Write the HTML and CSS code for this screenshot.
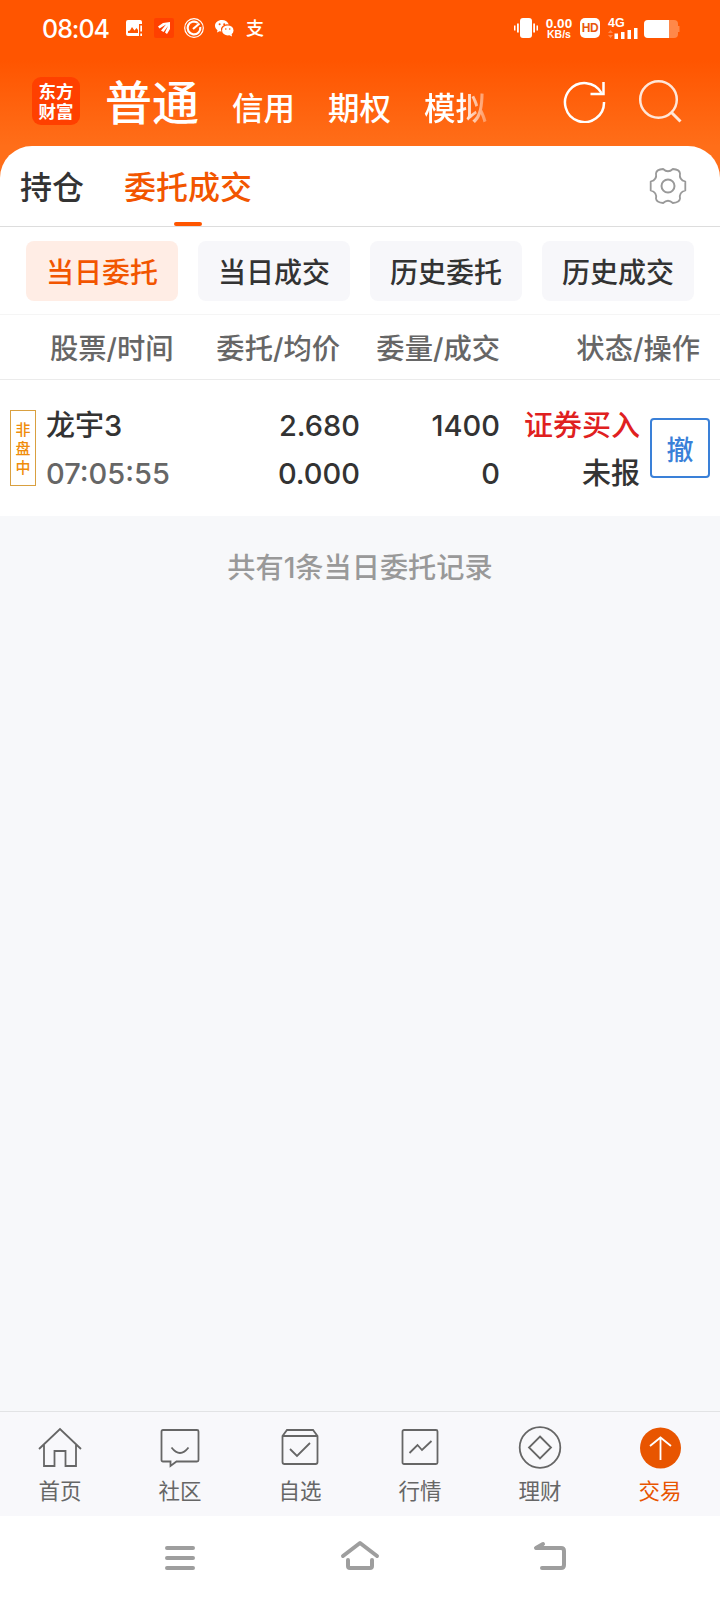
FILE: index.html
```
<!DOCTYPE html>
<html lang="zh-CN">
<head>
  <meta charset="UTF-8">
  <meta name="viewport" content="width=device-width, initial-scale=1.0">
  <title>委托成交</title>
  <link rel="stylesheet" href="styles.css">
</head>
<body>
  <div class="app">
    <header class="header">
      <div class="status">
        <span class="time">08:04</span>
        <svg class="s-pic" width="16" height="16" viewBox="0 0 16 16">
          <path fill="#fff" fill-rule="evenodd" d="M2 0H14Q16 0 16 2V4H13V16H2Q0 16 0 14V2Q0 0 2 0ZM2 13H12V10L10.500 8L8.500 10.500L6 7L4 10.500L2 11Z"/>
          <path fill="#fff" d="M14.300 5.500H16v6h-1.700zM14.300 13.500H16V16h-1.700z"/>
        </svg>
        <svg class="s-app" width="20" height="20" viewBox="0 0 20 20">
          <rect width="20" height="20" rx="2" fill="#ff4000"/>
          <path fill="#fff" d="M16 4V11L13 16L11 14.500L14 8L9.500 14L7 12.500L12 6.500L5.500 10.500L4 8.500L9 5Z"/>
        </svg>
        <svg class="s-gauge" width="20" height="20" viewBox="0 0 20 20" fill="none" stroke="#fff">
          <circle cx="10" cy="10" r="9.300" stroke-width="1.200"/>
          <path d="M14 5A6.400 6.400 0 1 0 16.300 9" stroke-width="2.200"/>
          <path d="M9 11L15.500 5.500" stroke-width="2.200"/>
        </svg>
        <svg class="s-chat" width="19" height="17" viewBox="0 0 19 17">
          <path fill="#fff" d="M7 0C3 0 0 2.500 0 5.800C0 7.600 1 9.200 2.500 10.200L2 12.500L4.500 11.200L6.500 11.600A6 5.200 0 0 1 13.800 4.600C13 2 10.300 0 7 0Z"/>
          <ellipse cx="12.800" cy="10.400" rx="5.700" ry="5" fill="#fff"/>
          <path fill="#fff" d="M14 15L17 16.500L16.500 13.500Z"/>
          <g fill="#ff5500"><circle cx="4.600" cy="4.300" r="1"/><circle cx="9.200" cy="4.300" r="1"/><circle cx="10.800" cy="9" r=".8"/><circle cx="14.700" cy="9" r=".8"/></g>
        </svg>
        <span class="s-pay">支</span>
        <div class="status-right">
          <svg width="24" height="20" viewBox="0 0 24 20" fill="#fff">
            <rect x="6" width="12" height="20" rx="3"/>
            <path d="M0 7.500h1.500v5H0zM3 5.500h1.800v9H3zM19.200 5.500H21v9h-1.800zM22.500 7.500H24v5h-1.500z"/>
          </svg>
          <div class="speed"><b>0.00</b><i>KB/s</i></div>
          <span class="hd">HD</span>
          <div class="signal">
            <b>4G</b>
            <svg width="30" height="12" viewBox="0 0 30 12" fill="#fff">
              <path d="M0 6L2.500 3L5 6ZM0 8L2.500 11L5 8Z" opacity=".3"/>
              <path d="M6.500 6.500H10V12H6.500zM13 5h3.500v7H13zM19.500 3H23v9h-3.500zM26 1h3.500v11H26z"/>
            </svg>
          </div>
          <svg class="battery" width="36" height="18" viewBox="0 0 36 18">
            <rect width="34" height="18" rx="4" fill="#ff8849"/>
            <path fill="#ff8849" d="M33 6h2.500v6H33z"/>
            <path fill="#fff" d="M4 0H25V18H4Q0 18 0 14V4Q0 0 4 0Z"/>
          </svg>
        </div>
      </div>
      <div class="topbar">
        <div class="logo">东方<br>财富</div>
        <nav class="accounts">
          <span class="current">普通</span>
          <span>信用</span>
          <span>期权</span>
          <span class="fade">模拟</span>
        </nav>
        <svg class="refresh" width="44" height="44" viewBox="0 0 44 44" fill="none" stroke="#fff" stroke-width="2.500">
          <path d="M42 23A19.500 19.500 0 1 1 39.500 14"/>
          <path d="M41.500 3V15H28.500"/>
        </svg>
        <svg class="search" width="44" height="44" viewBox="0 0 44 44" fill="none" stroke="#ffe6d8" stroke-width="2.500">
          <circle cx="20.500" cy="20.500" r="18.300"/>
          <path d="M33 33L42.500 42.500" stroke-width="3"/>
        </svg>
      </div>
    </header>

    <main class="panel">
      <div class="tabs">
        <span class="tab">持仓</span>
        <span class="tab active">委托成交</span>
        <svg class="gear" width="38" height="38" viewBox="-19 -19 38 38" fill="none" stroke="#999" stroke-width="1.800" stroke-linejoin="round">
          <path d="M17.300 4.500Q10.800 6.200 12 12.700Q11.500 16.500 4.900 17Q0 12.500 -4.900 17Q-11.500 16.500 -12 12.700Q-10.800 6.200 -17.300 4.500V-4.500Q-10.800 -6.200 -12 -12.700Q-11.500 -16.500 -4.900 -17Q0 -12.500 4.900 -17Q11.500 -16.500 12 -12.700Q10.800 -6.200 17.300 -4.500Z"/>
          <circle r="6.500" stroke-width="2"/>
        </svg>
      </div>
      <div class="filters">
        <button class="filter selected">当日委托</button>
        <button class="filter">当日成交</button>
        <button class="filter">历史委托</button>
        <button class="filter">历史成交</button>
      </div>
      <div class="list-head">
        <span>股票/时间</span>
        <span>委托/均价</span>
        <span>委量/成交</span>
        <span>状态/操作</span>
      </div>
      <div class="order">
        <div class="badge">非<br>盘<br>中</div>
        <div class="cell"><p>龙宇3</p><p class="muted">07:05:55</p></div>
        <div class="cell right"><p>2.680</p><p>0.000</p></div>
        <div class="cell right"><p>1400</p><p>0</p></div>
        <div class="cell right"><p class="buy">证券买入</p><p>未报</p></div>
        <button class="cancel">撤</button>
      </div>
    </main>
    <p class="summary">共有1条当日委托记录</p>

    <nav class="tabbar">
      <a class="item">
        <svg width="44" height="44" viewBox="0 0 44 44">
          <path d="M1 23L22 3L43 23M6 19V40H16.500V25H27.500V40H38V19"/>
        </svg>
        <span>首页</span>
      </a>
      <a class="item">
        <svg width="44" height="44" viewBox="0 0 44 44">
          <path d="M5 4H39Q40.500 4 40.500 5.500V34Q40.500 35.500 39 35.500H18.500L12.500 40V35.500H5Q3.500 35.500 3.500 34V5.500Q3.500 4 5 4Z"/>
          <path d="M13.500 21.500Q22 32.500 30.500 21.500"/>
        </svg>
        <span>社区</span>
      </a>
      <a class="item">
        <svg width="44" height="44" viewBox="0 0 44 44">
          <path d="M4.500 10L9 4H35L39.500 10V36Q39.500 38 37.500 38H6.500Q4.500 38 4.500 36ZM4.500 10H39.500"/>
          <path d="M12 23L19 30L32 17"/>
        </svg>
        <span>自选</span>
      </a>
      <a class="item">
        <svg width="44" height="44" viewBox="0 0 44 44">
          <rect x="4.500" y="4" width="35" height="34" rx="1.500"/>
          <path d="M11.500 27L19.500 19L24 24L33.500 15"/>
        </svg>
        <span>行情</span>
      </a>
      <a class="item">
        <svg width="44" height="44" viewBox="0 0 44 44">
          <circle cx="22" cy="21.500" r="20.300"/>
          <path d="M22 10.500L33 21.500L22 32.500L11 21.500Z"/>
        </svg>
        <span>理财</span>
      </a>
      <a class="item on">
        <svg width="44" height="44" viewBox="0 0 44 44">
          <circle class="disc" cx="22.500" cy="22" r="20.500"/>
          <path class="arrow" d="M22.500 34V11.500M12 20L22.500 11.500L33 20"/>
        </svg>
        <span>交易</span>
      </a>
    </nav>

    <div class="sysnav">
      <svg width="40" height="40" viewBox="0 0 40 40"><path d="M7 10H33M7 20H33M7 30H33"/></svg>
      <svg width="40" height="40" viewBox="0 0 40 40"><path d="M3 18L20 5L37 18M8 22V28Q8 30 10 30H30Q32 30 32 28V22"/></svg>
      <svg width="40" height="40" viewBox="0 0 40 40"><path d="M13 6L6 10H31Q34 10 34 13V27Q34 30 31 30H12"/></svg>
    </div>
  </div>
</body>
</html>
```

FILE: styles.css
```
*{
  box-sizing: border-box;
}

body{
  margin: 0;
  font-family: Inter, "Noto Sans CJK SC", sans-serif;
  color: #333;
}

p{
  margin: 0;
}

svg{
  display: block;
  flex: none;
}

button{
  padding: 0;
  border: none;
  font-family: inherit;
  font-weight: 500;
}

.app{
  width: 720px;
  height: 1600px;
  display: flex;
  flex-direction: column;
  background-color: #f7f8fa;
}

/* header */
.header{
  height: 186px;
  margin-bottom: -40px;
  background: linear-gradient(#ff5500 60px, #ff6e19 146px);
  color: white;
}

.status{
  height: 56px;
  padding: 0 40px 0 42px;
  display: flex;
  align-items: center;
}

.time{
  width: 84px;
  padding-top: 2px;
  font-size: 25px;
  font-weight: 500;
  letter-spacing: -1px;
}

.s-app{
  margin-left: 12px;
}

.s-gauge{
  margin-left: 10px;
}

.s-chat{
  margin-left: 11px;
}

.s-pay{
  margin-left: 12px;
  padding-top: 2px;
  font-size: 18px;
  font-weight: 500;
  line-height: 20px;
}

.status-right{
  margin-left: auto;
  display: flex;
  align-items: center;
}

.speed{
  width: 28px;
  margin-left: 7px;
  font-family: "Liberation Sans", sans-serif;
  font-weight: bold;
  text-align: center;
}

.speed b, .speed i{
  display: block;
  font-style: normal;
  font-size: 13.5px;
  line-height: 11px;
}

.speed i{
  font-size: 10.5px;
  line-height: 10px;
}

.hd{
  width: 20px;
  height: 20px;
  margin-left: 7px;
  border-radius: 5px;
  background-color: white;
  color: #e8560c;
  font: bold 12px/20px "Liberation Sans", sans-serif;
  letter-spacing: -.5px;
  text-align: center;
}

.signal{
  width: 30px;
  margin-left: 8px;
}

.signal b{
  display: block;
  height: 9px;
  font: bold 12.5px/11px "Liberation Sans", sans-serif;
}

.battery{
  margin: 2px 0 0 6px;
}

.topbar{
  height: 90px;
  padding: 0 38px 0 32px;
  display: flex;
  align-items: center;
}

.logo{
  width: 48px;
  height: 48px;
  padding-top: 5px;
  border-radius: 9px;
  background-color: #ff4000;
  font-size: 17.5px;
  font-weight: bold;
  line-height: 20px;
  text-align: center;
}

.accounts{
  margin: -3px 0 0 25px;
  display: flex;
  align-items: baseline;
  gap: 33px;
  font-size: 31.5px;
  font-weight: 500;
}

.accounts .current{
  font-size: 47px;
}

.fade{
  -webkit-mask-image: linear-gradient(to right, #000 60%, rgba(0, 0, 0, .3));
  mask-image: linear-gradient(to right, #000 60%, rgba(0, 0, 0, .3));
}

.refresh{
  margin-left: auto;
}

.search{
  margin-left: 32px;
}

/* order panel */
.panel{
  border-radius: 32px 32px 0 0;
  background-color: white;
}

.tabs{
  height: 81px;
  padding: 0 33px 0 20px;
  display: flex;
  align-items: stretch;
  border-bottom: 1px solid #ddd;
}

.tab{
  height: 80px;
  margin-right: 40px;
  font-size: 32px;
  font-weight: 500;
  line-height: 84px;
}

.tab.active{
  display: flex;
  flex-direction: column;
  align-items: center;
  color: #f25500;
}

.tab.active::after{
  content: "";
  width: 28px;
  height: 4px;
  margin-top: -8px;
  border-radius: 2px;
  background-color: #ff5500;
}

.gear{
  margin: 21px 0 0 auto;
}

.filters{
  height: 88px;
  padding: 14px 26px 0;
  display: grid;
  grid-template-columns: repeat(4, 1fr);
  gap: 20px;
  border-bottom: 1px solid #f5f5f5;
}

.filter{
  height: 60px;
  border-radius: 8px;
  background-color: #f7f7fa;
  color: #333;
  font-size: 28px;
}

.filter.selected{
  background-color: #ffede5;
  color: #f25500;
}

.list-head{
  height: 65px;
  padding: 0 20px 0 50px;
  display: grid;
  grid-template-columns: 130px 160px 160px 200px;
  border-bottom: 1px solid #ebebeb;
  color: #666;
  font-size: 28.3px;
  font-weight: 500;
  line-height: 68px;
  text-align: right;
}

.list-head span:first-child{
  text-align: left;
}

.order{
  height: 136px;
  padding: 0 10px;
  display: grid;
  grid-template-columns: 26px 10px 134px 180px 140px 140px 10px 60px;
  align-items: center;
}

.badge{
  height: 76px;
  padding-top: 9px;
  border: 1px solid #d9a040;
  color: #f08c0a;
  font-size: 15px;
  font-weight: 500;
  line-height: 19px;
  text-align: center;
}

.cell{
  padding-top: 4px;
  font-size: 29px;
  font-weight: 500;
  line-height: 48px;
}

.badge + .cell{
  grid-column: 3;
}

.right{
  text-align: right;
}

.muted{
  color: #666;
}

.buy{
  color: #e02020;
}

.cancel{
  grid-column: 8;
  height: 60px;
  border: 2px solid #3a80d8;
  border-radius: 4px;
  background-color: white;
  color: #3a80d8;
  font-size: 27px;
}

.summary{
  margin-top: 32px;
  color: #999;
  font-size: 28.2px;
  font-weight: 500;
  line-height: 40px;
  text-align: center;
}

/* bottom bars */
.tabbar{
  height: 105px;
  margin-top: auto;
  display: grid;
  grid-template-columns: repeat(6, 1fr);
  border-top: 1px solid #e2e3e5;
  background-color: #f8f8fb;
}

.item{
  padding-top: 14px;
  display: flex;
  flex-direction: column;
  align-items: center;
  color: #666;
  font-size: 21.5px;
  line-height: 42px;
}

.item svg{
  fill: none;
  stroke: #666;
  stroke-width: 1.8;
}

.item.on{
  color: #e85500;
}

.item .disc{
  fill: #e85500;
  stroke: none;
}

.item .arrow{
  stroke: white;
}

.sysnav{
  height: 84px;
  padding-left: 160px;
  display: flex;
  align-items: center;
  background-color: white;
}

.sysnav svg{
  margin-right: 140px;
  fill: none;
  stroke: #9e9e9e;
  stroke-width: 4;
  stroke-linecap: round;
  stroke-linejoin: round;
}

.sysnav svg:nth-child(2){
  margin-right: 150px;
}
```
